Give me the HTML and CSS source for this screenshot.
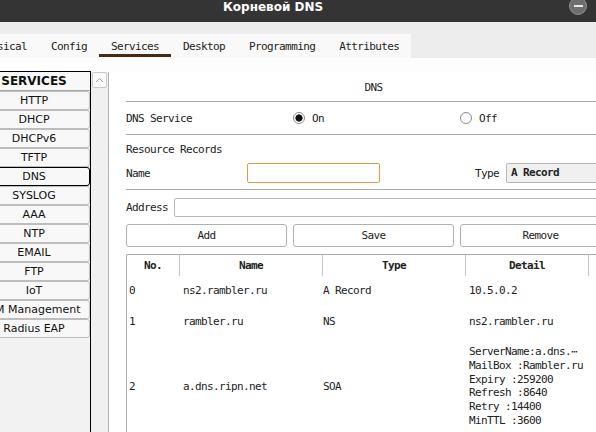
FILE: index.html
```html
<!DOCTYPE html>
<html lang="ru">
<head>
<meta charset="utf-8">
<title>Корневой DNS</title>
<link rel="stylesheet" href="styles.css">
</head>
<body>
<div class="titlebar">
  <span class="title">Корневой DNS</span>
  <span class="min-btn"></span>
</div>
<div class="topstrip"></div>
<div class="tabbar">
  <div class="tabs">
    <span class="tab">Physical</span>
    <span class="tab">Config</span>
    <span class="tab active">Services</span>
    <span class="tab">Desktop</span>
    <span class="tab">Programming</span>
    <span class="tab">Attributes</span>
  </div>
</div>
<div class="body">
  <aside class="sidebar">
    <div class="list">
      <div class="list-head">SERVICES</div>
      <div class="item">HTTP</div>
      <div class="item">DHCP</div>
      <div class="item">DHCPv6</div>
      <div class="item">TFTP</div>
      <div class="item selected">DNS</div>
      <div class="item">SYSLOG</div>
      <div class="item">AAA</div>
      <div class="item">NTP</div>
      <div class="item">EMAIL</div>
      <div class="item">FTP</div>
      <div class="item">IoT</div>
      <div class="item">VM Management</div>
      <div class="item">Radius EAP</div>
    </div>
    <div class="scroll">
      <div class="scroll-up">
        <svg width="9" height="6" viewBox="0 0 9 6"><polyline points="1,5 4.5,1.5 8,5" fill="none" stroke="#a0a0a0" stroke-width="1"/></svg>
      </div>
    </div>
  </aside>
  <main class="panel">
    <div class="panel-title">DNS</div>
    <div class="service-row">
      <span>DNS Service</span>
      <span class="radio-opt"><span class="radio checked"></span>On</span>
      <span class="radio-opt"><span class="radio"></span>Off</span>
    </div>
    <div class="rr">
      <div class="rr-label">Resource Records</div>
      <div class="name-row">
        <span class="name-label">Name</span>
        <span class="input focus"></span>
        <span class="type-label">Type</span>
        <span class="select">A Record</span>
      </div>
    </div>
    <div class="addr-row">
      <span>Address</span>
      <span class="input addr"></span>
    </div>
    <div class="btn-row">
      <button class="btn">Add</button>
      <button class="btn">Save</button>
      <button class="btn">Remove</button>
    </div>
    <table class="records">
      <colgroup>
        <col class="w-no"><col class="w-name"><col class="w-type"><col class="w-detail"><col class="w-extra">
      </colgroup>
      <thead>
        <tr><th>No.</th><th>Name</th><th>Type</th><th>Detail</th><th></th></tr>
      </thead>
      <tbody>
        <tr>
          <td class="c-no">0</td><td class="c-name">ns2.rambler.ru</td><td class="c-type">A Record</td><td class="c-detail">10.5.0.2</td><td></td>
        </tr>
        <tr>
          <td class="c-no">1</td><td class="c-name">rambler.ru</td><td class="c-type">NS</td><td class="c-detail">ns2.rambler.ru</td><td></td>
        </tr>
        <tr>
          <td class="c-no">2</td><td class="c-name">a.dns.ripn.net</td><td class="c-type">SOA</td>
          <td class="c-detail multi">
            <div>ServerName:a.dns.⋯</div>
            <div>MailBox :Rambler.ru</div>
            <div>Expiry :259200</div>
            <div>Refresh :8640</div>
            <div>Retry :14400</div>
            <div>MinTTL :3600</div>
          </td><td></td>
        </tr>
      </tbody>
    </table>
  </main>
</div>
</body>
</html>
```

FILE: styles.css
```css
html, body {
  margin: 0;
  padding: 0;
}
body {
  width: 596px;
  height: 432px;
  overflow: hidden;
  background: #fdfdfd;
  font-family: "DejaVu Sans Mono", monospace;
  font-size: 11px;
  letter-spacing: -0.62px;
  color: #222;
}

.titlebar {
  height: 22px;
  background: #343434;
  display: flex;
  align-items: flex-start;
  color: #fff;
}
.title {
  margin-left: 223px;
  font: bold 12px/14px "DejaVu Sans", sans-serif;
  letter-spacing: 0;
}
.min-btn {
  margin-left: auto;
  margin-right: 9px;
  margin-top: -3px;
  width: 18px;
  height: 18px;
  box-sizing: border-box;
  border-radius: 50%;
  background: #6e6e6e;
  border: 1px solid #8e8e8e;
  display: flex;
  align-items: center;
  justify-content: center;
}
.min-btn::before {
  content: "";
  width: 9px;
  height: 2px;
  background: #e8e8e8;
}

.topstrip {
  height: 12px;
  background: #ededed;
}
.tabbar {
  height: 24px;
  background: #ededed;
  display: flex;
}
.tabs {
  display: flex;
  margin-left: -33px;
  background: #f9f9f9;
}
.tab {
  padding: 1px 12px 0;
  line-height: 23px;
  position: relative;
  white-space: nowrap;
}
.tab.active::after {
  content: "";
  position: absolute;
  left: 0;
  right: 0;
  bottom: 1px;
  height: 3px;
  background: #4b2a14;
}

.body {
  display: flex;
  margin-top: 13px;
  height: 361px;
  background: #fff;
}

.sidebar {
  display: flex;
  margin-left: -22px;
  height: 100%;
  flex: none;
}
.list {
  width: 113px;
  box-sizing: border-box;
  border-top: 1px solid #000;
  border-right: 1px solid #000;
  background: #f2f2f2;
  font: 11px/17px "DejaVu Sans", sans-serif;
  letter-spacing: 0;
  color: #111;
}
.list-head {
  height: 19px;
  box-sizing: border-box;
  border-bottom: 1px solid #a8a8a8;
  background: #f8f8f8;
  font-weight: bold;
  font-size: 12px;
  line-height: 19px;
  text-align: center;
}
.item {
  height: 19px;
  box-sizing: border-box;
  border: 1px solid #bdbdbd;
  border-radius: 3px;
  background: #f8f8f8;
  text-align: center;
  line-height: 17px;
  white-space: nowrap;
  overflow: hidden;
}
.item.selected {
  border-color: #000;
}

.scroll {
  width: 18px;
  box-sizing: border-box;
  margin-top: 1px;
  padding: 0 1px;
  border-right: 1px solid #b4b4b4;
  background: #f0f0f0;
}
.scroll-up {
  height: 16px;
  box-sizing: border-box;
  border: 1px solid #c9c9c9;
  border-radius: 2px;
  background: #fbfbfb;
  display: flex;
  align-items: center;
  justify-content: center;
}

.panel {
  margin-left: 17px;
  width: 495px;
  flex: none;
}
.panel-title {
  padding: 10px 0 6px;
  line-height: 14px;
  text-align: center;
  border-bottom: 1px solid #ababab;
}
.service-row {
  display: grid;
  grid-template-columns: repeat(3, 161px);
  column-gap: 6px;
  height: 32px;
  align-items: center;
  border-bottom: 1px solid #ababab;
}
.radio-opt {
  display: flex;
  align-items: center;
  gap: 7px;
}
.radio {
  width: 12px;
  height: 12px;
  box-sizing: border-box;
  border: 1px solid #8c8c8c;
  border-radius: 50%;
  background: #fff;
}
.radio.checked {
  background: radial-gradient(circle, #111 0 3.3px, #fff 3.9px);
}

.rr {
  padding: 8px 0 6px;
  border-bottom: 1px solid #ababab;
}
.rr-label {
  line-height: 14px;
}
.name-row {
  display: flex;
  align-items: center;
  margin-top: 6px;
  height: 20px;
}
.name-label {
  width: 121px;
  flex: none;
}
.input {
  display: block;
  height: 20px;
  box-sizing: border-box;
  background: #fff;
  border: 1px solid #b8b8b8;
  border-radius: 2px;
}
.input.focus {
  width: 133px;
  flex: none;
  border-color: #e8983f;
}
.type-label {
  margin-left: auto;
  margin-right: 7px;
}
.select {
  width: 115px;
  height: 20px;
  box-sizing: border-box;
  padding-left: 4px;
  line-height: 18px;
  font-weight: bold;
  background: #f0f0f0;
  border: 1px solid #b8b8b8;
  border-radius: 2px;
}

.addr-row {
  display: flex;
  align-items: center;
  gap: 6px;
  margin-top: 8px;
}
.input.addr {
  flex: 1;
  height: 19px;
}

.btn-row {
  display: grid;
  grid-template-columns: repeat(3, 161px);
  column-gap: 6px;
  margin-top: 7px;
}
.btn {
  height: 23px;
  margin: 0;
  padding: 0;
  font: inherit;
  letter-spacing: inherit;
  color: #222;
  background: #fff;
  border: 1px solid #b0b0b0;
  border-radius: 3px;
}

.records {
  margin-top: 7px;
  width: 495px;
  table-layout: fixed;
  border-collapse: separate;
  border-spacing: 0;
  border-top: 1px solid #ababab;
  border-left: 1px solid #ababab;
  border-top-left-radius: 2px;
  background: #fff;
}
.w-no { width: 52px; }
.w-name { width: 143px; }
.w-type { width: 143px; }
.w-detail { width: 123px; }
.w-extra { width: 33px; }
.records th {
  height: 21px;
  padding: 0;
  font-weight: bold;
  text-align: center;
  line-height: 14px;
  border-left: 1px solid #c4c4c4;
}
.records th:first-child {
  border-left: 0;
}
.records td {
  padding: 8px 4px 9px;
  line-height: 14px;
  vertical-align: middle;
  white-space: nowrap;
  overflow: hidden;
  text-align: left;
}
.records td.c-no { padding-left: 2px; }
.records td.c-name { padding-left: 4px; }
.records td.c-type { padding-left: 1px; }
.records td.c-detail { padding-left: 4px; }
.records td.multi {
  padding-top: 7px;
}
.records td.multi div {
  line-height: 13.8px;
}
```
